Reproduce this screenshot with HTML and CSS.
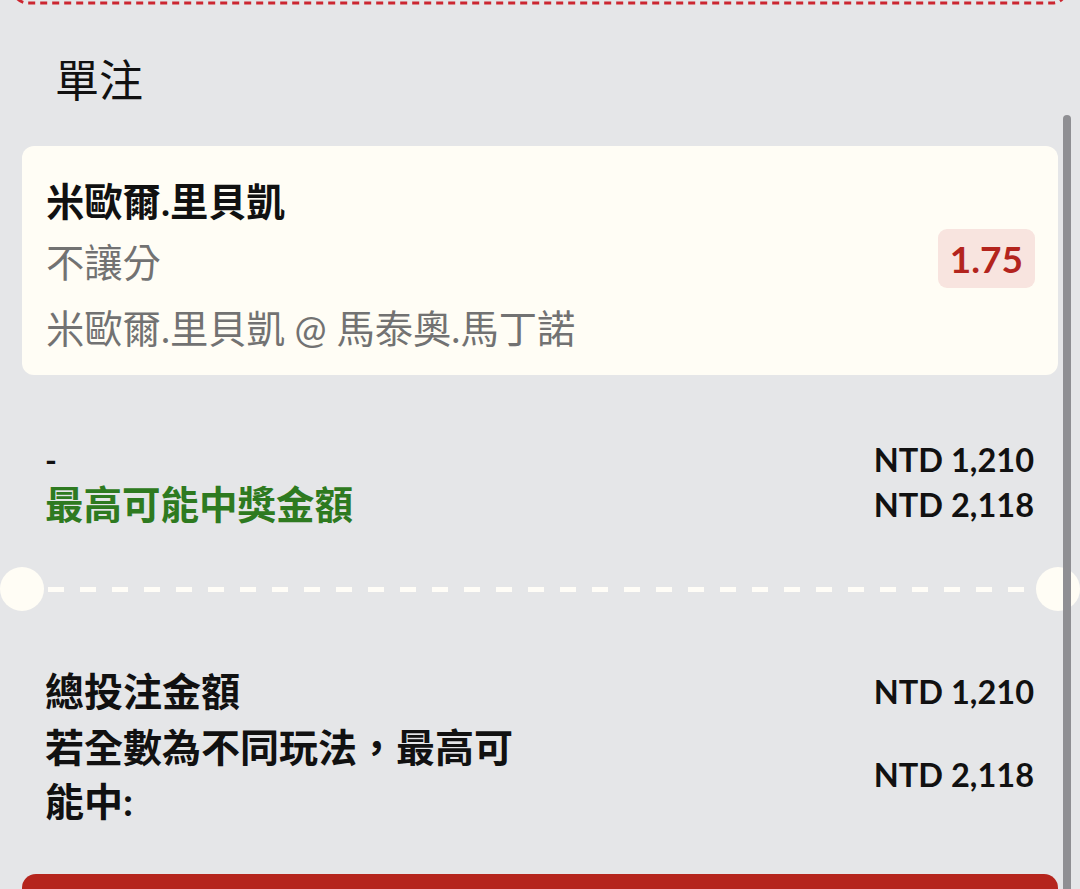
FILE: index.html
```html
<!DOCTYPE html>
<html lang="zh-Hant">
<head>
<meta charset="utf-8">
<title>單注</title>
<link rel="stylesheet" href="styles.css">
</head>
<body>
<div class="page">
  <div class="prev-box">
    <svg class="prev-outline" width="1056" height="60" viewBox="0 0 1056 60" aria-hidden="true">
      <rect x="1.5" y="-20" width="1053" height="78" rx="14" ry="14" fill="none" stroke="#cc2630" stroke-width="3" stroke-dasharray="7 5"/>
    </svg>
  </div>
  <h2 class="section-title">單注</h2>
  <div class="bet-card">
    <div class="bet-info">
      <div class="bet-name">米歐爾.里貝凱</div>
      <div class="bet-market">不讓分</div>
      <div class="bet-match">米歐爾.里貝凱 @ 馬泰奧.馬丁諾</div>
    </div>
    <div class="odds">1.75</div>
  </div>
  <div class="summary summary-top">
    <div class="label dash">-</div>
    <div class="value">NTD 1,210</div>
    <div class="label green">最高可能中獎金額</div>
    <div class="value">NTD 2,118</div>
  </div>
  <div class="divider">
    <span class="notch"></span>
    <span class="dash-line"></span>
    <span class="notch"></span>
  </div>
  <div class="summary summary-bottom">
    <div class="label">總投注金額</div>
    <div class="value">NTD 1,210</div>
    <div class="label wrap">若全數為不同玩法，最高可能中:</div>
    <div class="value">NTD 2,118</div>
  </div>
  <div class="submit-btn"></div>
</div>
<div class="scrollbar"></div>
</body>
</html>
```
FILE: styles.css
```css
html, body {
  margin: 0;
  padding: 0;
  background: #e5e6e8;
  height: 100%;
  overflow: hidden;
}
body {
  font-family: Lato, "Noto Sans CJK TC", "Noto Sans", sans-serif;
  color: #111;
  position: relative;
}
.page {
  display: flex;
  flex-direction: column;
}
.prev-box {
  height: 60px;
  margin: -55px 12px 0;
  display: flex;
}
.prev-outline {
  display: block;
}
.section-title {
  margin: 45px 0 0 55px;
  font-size: 44px;
  line-height: 60px;
  font-weight: 400;
  color: #111;
}
.bet-card {
  margin: 36px 22px 0;
  background: #fffdf5;
  border-radius: 12px;
  padding: 30px 23px 22px 24px;
  display: flex;
  align-items: center;
  justify-content: space-between;
}
.bet-info {
  display: flex;
  flex-direction: column;
}
.bet-name {
  font-size: 38.3px;
  line-height: 50px;
  font-weight: 700;
  color: #111;
}
.bet-market, .bet-match {
  font-size: 38.3px;
  line-height: 50px;
  color: #727272;
}
.bet-market { margin-top: 11px; }
.bet-match { margin-top: 16px; }
.odds {
  background: #f8e4df;
  color: #b3241d;
  font-weight: 700;
  font-size: 37px;
  line-height: 59px;
  padding: 0 12px;
  border-radius: 9px;
  margin-bottom: 12px;
}
.summary {
  display: grid;
  grid-template-columns: 1fr auto;
  align-items: center;
  padding: 0 46px 0 45px;
  font-weight: 700;
}
.summary-top {
  margin-top: 62px;
}
.summary-top .label, .summary-top .value {
  line-height: 45px;
}
.label {
  font-size: 38.5px;
}
.label.dash {
  font-size: 32px;
}
.label.green {
  color: #2e7a20;
}
.value {
  font-size: 32.5px;
  text-align: right;
  color: #111;
}
.divider {
  margin-top: 40px;
  display: flex;
  align-items: center;
  height: 44px;
}
.notch {
  width: 44px;
  height: 44px;
  border-radius: 50%;
  background: #fffdf5;
  flex: none;
}
.dash-line {
  flex: 1;
  height: 5px;
  margin: 0 6px 0 4px;
  background: repeating-linear-gradient(to right, #fffdf7 0 16px, transparent 16px 32px);
}
.summary-bottom {
  margin-top: 53px;
  row-gap: 2px;
}
.summary-bottom .label {
  font-size: 39px;
  line-height: 54px;
}
.label.wrap {
  max-width: 490px;
}
.submit-btn {
  margin: 46px 22px 0;
  height: 80px;
  background: #b5251d;
  border-radius: 14px;
}
.scrollbar {
  position: absolute;
  left: 1063px;
  top: 115px;
  width: 8px;
  height: 800px;
  border-radius: 4px;
  background: #8f8f93;
}
```
